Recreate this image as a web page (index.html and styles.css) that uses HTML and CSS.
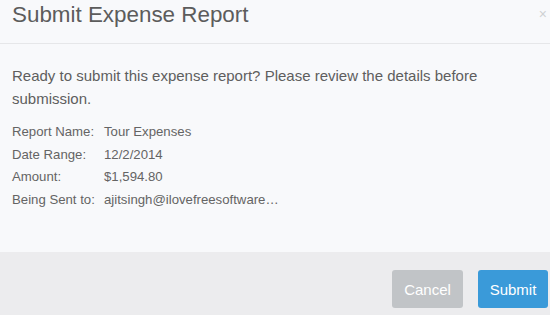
FILE: index.html
```html
<!DOCTYPE html>
<html lang="en">
<head>
    <meta charset="UTF-8">
    <title>Submit Expense Report</title>
    <link rel="stylesheet" href="styles.css">
</head>
<body>
    <div class="modal">
        <div class="modal-header">
            <h2>Submit Expense Report</h2>
            <span class="close">&times;</span>
        </div>
        <div class="modal-body">
            <p>Ready to submit this expense report? Please review the details before submission.</p>
            <div class="details">
                <div class="row"><span class="label">Report Name:</span><span>Tour Expenses</span></div>
                <div class="row"><span class="label">Date Range:</span><span>12/2/2014</span></div>
                <div class="row"><span class="label">Amount:</span><span>$1,594.80</span></div>
                <div class="row"><span class="label">Being Sent to:</span><span>ajitsingh@ilovefreesoftware…</span></div>
            </div>
        </div>
        <div class="modal-footer">
            <button class="btn cancel">Cancel</button>
            <button class="btn submit">Submit</button>
        </div>
    </div>
</body>
</html>
```

FILE: styles.css
```css
body {
    margin: 0;
    font-family: "Liberation Sans", Arial, sans-serif;
    color: #5a5a5a;
}
.modal {
    height: 100vh;
    display: flex;
    flex-direction: column;
    background: #f8f9fb;
}
.modal-header {
    display: flex;
    justify-content: space-between;
    height: 44px;
    box-sizing: border-box;
    padding: 0 3px 0 12px;
    border-bottom: 1px solid #e6e7e9;
}
.modal-header h2 {
    margin: 0;
    font-size: 22.4px;
    font-weight: normal;
    line-height: 30px;
    color: #5c5c5c;
}
.close {
    font-size: 14px;
    line-height: 28px;
    color: #cfd1d3;
}
.modal-body {
    flex: 1;
    padding: 20px 12px 0;
}
.modal-body p {
    margin: 0 0 11px;
    font-size: 15px;
    line-height: 23px;
    color: #5e5e5e;
}
.details {
    font-size: 13.2px;
    line-height: 22.5px;
    color: #646464;
}
.row {
    display: flex;
}
.label {
    width: 92px;
}
.modal-footer {
    height: 63px;
    box-sizing: border-box;
    display: flex;
    justify-content: flex-end;
    gap: 15px;
    padding: 18px 2px 0 0;
    background: #ececee;
}
.btn {
    height: 38px;
    border: none;
    border-radius: 3px;
    font-family: inherit;
    font-size: 15px;
    color: #fff;
    cursor: pointer;
}
.cancel {
    width: 71px;
    background: #c1c4c7;
}
.submit {
    width: 70px;
    background: #3a9ad9;
}
```
